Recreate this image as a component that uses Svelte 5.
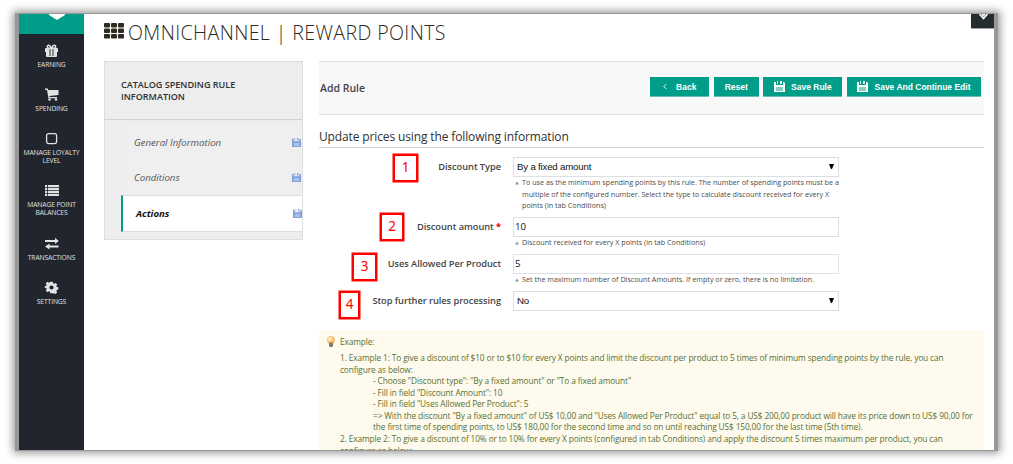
<script>
  const nav = [
    { icon: 'gift', lines: ['EARNING'] },
    { icon: 'cart', lines: ['SPENDING'] },
    { icon: 'square', lines: ['MANAGE LOYALTY', 'LEVEL'] },
    { icon: 'list', lines: ['MANAGE POINT', 'BALANCES'] },
    { icon: 'swap', lines: ['TRANSACTIONS'] },
    { icon: 'gear', lines: ['SETTINGS'] }
  ];
  const tabs = [
    { name: 'General Information' },
    { name: 'Conditions' },
    { name: 'Actions', active: true }
  ];
  const fields = [
    {
      label: 'Discount Type', value: 'By a fixed amount', select: true, height: 60,
      hint: ['To use as the minimum spending points by this rule. The number of spending points must be a', 'multiple of the configured number. Select the type to calculate discount received for every X', 'points (in tab Conditions)']
    },
    { label: 'Discount amount', value: '10', required: true, height: 37, hint: ['Discount received for every X points (in tab Conditions)'] },
    { label: 'Uses Allowed Per Product', value: '5', height: 37, hint: ['Set the maximum number of Discount Amounts. If empty or zero, there is no limitation.'] },
    { label: 'Stop further rules processing', value: 'No', select: true, height: 39, hint: [] }
  ];
  const marks = [
    { n: 1, x: 393, y: 154, w: 25 },
    { n: 2, x: 380, y: 213, w: 24 },
    { n: 3, x: 352, y: 253, w: 25 },
    { n: 4, x: 339, y: 291, w: 21 }
  ];
  const example = [
    { t: '1. Example 1: To give a discount of $10 or to $10 for every X points and limit the discount per product to 5 times of minimum spending points by the rule, you can' },
    { t: 'configure as below:' },
    { t: '- Choose "Discount type": "By a fixed amount" or "To a fixed amount"', sub: true },
    { t: '- Fill in field "Discount Amount": 10', sub: true },
    { t: '- Fill in field "Uses Allowed Per Product": 5', sub: true },
    { t: '=> With the discount "By a fixed amount" of US$ 10,00 and "Uses Allowed Per Product" equal to 5, a US$ 200,00 product will have its price down to US$ 90,00 for', sub: true },
    { t: 'the first time of spending points, to US$ 180,00 for the second time and so on until reaching US$ 150,00 for the last time (5th time).', sub: true },
    { t: '2. Example 2: To give a discount of 10% or to 10% for every X points (configured in tab Conditions) and apply the discount 5 times maximum per product, you can' },
    { t: 'configure as below:' }
  ];
</script>

{#snippet disk(cls)}
  <svg class={cls} viewBox="0 0 11 11">
    <path d="M0 1h2v3h7V1h1l1 1v9H0z" fill="currentColor" />
    <path d="M3 0h1v3H3zM6 0h2v3H6z" fill="currentColor" opacity=".85" />
    <path d="M2 6h7v4H2z" fill="var(--slot)" />
  </svg>
{/snippet}

<div class="page">
  <div class="window">
    <aside>
      <div class="logo"><svg width="18" height="6" viewBox="0 0 18 6"><path d="M1 0h16v1L9 6 1 1z" fill="#fff" /></svg></div>
      <nav>
        {#each nav as item}
          <div class="item" class:two={item.lines.length > 1}>
            <svg width="15" height="13" viewBox="0 0 15 13" fill="#e1e2e1">
              {#if item.icon === 'gift'}
                <path d="M2 4h11q1 0 1 1v3h-1v4q0 1-1 1H3q-1 0-1-1V8H1V5q0-1 1-1z" />
                <path d="M7.2 4.3C6.5 2 5.5 1 4.4 1.3c-1.7.5-1.2 3 .4 3zM7.8 4.3C8.500 2 9.500 1 10.600 1.300c1.700.5 1.200 3-.4 3z" fill="none" stroke="#e1e2e1" stroke-width="1.500" />
                <path d="M6 5v7M9 5v7" stroke="#20252e" stroke-width=".9" />
              {:else if item.icon === 'cart'}
                <path d="M1 .5h2.800l.4 1.500H14.500v5L5.400 8l.2 1H13v1.200H4.500L3 2H1z" /><circle cx="5.500" cy="11.500" r="1.300" /><circle cx="12" cy="11.500" r="1.300" />
              {:else if item.icon === 'square'}
                <rect x="2.600" y="1.600" width="10" height="10" rx="2" fill="none" stroke="#e1e2e1" stroke-width="1.300" />
              {:else if item.icon === 'list'}
                <path d="M1 1h2.200v2.200H1zM4 1h11v2.200H4zM1 4h2.200v2.200H1zM4 4h11v2.200H4zM1 7h2.200v2.200H1zM4 7h11v2.200H4zM1 10h2.200v2H1zM4 10h11v2H4z" />
              {:else if item.icon === 'swap'}
                <path d="M1 3h10V.8L14.800 4 11 7V5H1zM14.500 8.500h-9V6.500L1 9.600 5.500 12.500v-2h9z" />
              {:else}
                <path transform="translate(7.500 6.500) scale(.96)" fill-rule="evenodd" d="M-1.300-6h2.600l.3 1.600 1.200.5 1.400-.9 1.800 1.800-.9 1.400.4 1.100 1.600.3v2.400l-1.600.4-.4 1.200.9 1.400-1.800 1.700-1.400-.9-1.200.5L1.300 6h-2.600l-.3-1.500-1.200-.5-1.400.9L-6 3.200l.9-1.400-.4-1.200-1.600-.4v-1.400l1.600-.4.4-1.100-.9-1.400 1.800-1.800 1.400.9 1.200-.5zM0-2.200A2.200 2.200 0 1 0 0 2.200 2.200 2.200 0 1 0 0-2.200z" />
              {/if}
            </svg>
            {#each item.lines as line}<span>{line}</span>{/each}
          </div>
        {/each}
      </nav>
    </aside>

    <main>
      <header>
        <svg width="20" height="16" viewBox="0 0 20 16" fill="#2f2a20">
          {#each [0, 7, 14] as x}{#each [0, 5.500, 11] as y}<rect {x} {y} width="6" height="4.500" rx="1" />{/each}{/each}
        </svg>
        <h1>OMNICHANNEL | REWARD POINTS</h1>
        <div class="toggle"><svg width="13" height="8" viewBox="0 0 13 8"><path d="M2.500 0 6.500 4.500 10.500 0M5 0l1.500 1.500L8 0" fill="none" stroke="#fff" stroke-width="1.600" /></svg></div>
      </header>

      <div class="columns">
        <section class="tabs">
          <h2>CATALOG SPENDING RULE<br />INFORMATION</h2>
          <div class="tablist">
            {#each tabs as tab}
              <div class="tab" class:active={tab.active}><span>{tab.name}</span>{@render disk('mini')}</div>
            {/each}
          </div>
        </section>

        <section class="content">
          <div class="bar">
            <h3>Add Rule</h3>
            <div class="buttons">
              <button style:width="59px"><svg width="4" height="7" viewBox="0 0 5 7"><path d="M4 .5 1 3.500l3 3" fill="none" stroke="#fff" stroke-width="1.200" /></svg><span class="back">Back</span></button>
              <button style:width="45px">Reset</button>
              <button style:width="79px">{@render disk('save')}<span>Save Rule</span></button>
              <button style:width="134px">{@render disk('save')}<span>Save And Continue Edit</span></button>
            </div>
          </div>
          <h4>Update prices using the following information</h4>
          <div class="form">
            {#each fields as f}
              <div class="field" style:height="{f.height}px">
                <div class="label">{f.label}{#if f.required}<b>&nbsp;*</b>{/if}</div>
                <div class="control">
                  <div class="input" class:select={f.select}><span>{f.value}</span>{#if f.select}<svg width="5" height="5" viewBox="0 0 5 5"><path d="M0 0h5L3 5H2z" /></svg>{/if}</div>
                  {#if f.hint.length}
                    <div class="hint">
                      <svg width="4" height="4" viewBox="0 0 5 4"><path d="M2.500 0 5 4H0z" fill="#8599a2" /></svg>
                      <div>{#each f.hint as h}<p>{h}</p>{/each}</div>
                    </div>
                  {/if}
                </div>
              </div>
            {/each}
          </div>
          <div class="example">
            <div class="lead">
              <svg width="10" height="11" viewBox="0 0 10 11"><circle cx="5" cy="4" r="4" fill="#f3c577" /><circle cx="4" cy="3" r="2" fill="#fdebc0" /><path d="M3 7h4v3L6 11H4L3 10z" fill="#7a7780" /><path d="M3 6h4v1.200H3z" fill="#dd9838" /></svg>
              <span>Example:</span>
            </div>
            {#each example as line}<p class:sub={line.sub}>{line.t}</p>{/each}
          </div>
        </section>
      </div>
    </main>
  </div>
</div>
{#each marks as m}
  <div class="mark" style:left="{m.x}px" style:top="{m.y}px" style:width="{m.w}px">{m.n}</div>
{/each}

<style>
  :global(body) { margin: 0; background: #fff; }
  * { box-sizing: border-box; }
  h1, h2, h3, h4, p { margin: 0; font-weight: 400; white-space: nowrap; }
  svg { display: block; flex: none; }
  .page { height: 464px; padding: 14px 0 0 19px; background: #fff; }
  .window { position: relative; z-index: 0; width: 975px; height: 436px; display: flex; font-family: "Open Sans", sans-serif; color: #303030; }
  .window::before { content: ""; position: absolute; z-index: -1; inset: -1px -4px; background: #989898; box-shadow: 0 0 8px 2px #989898; }
  aside { width: 65px; flex: none; background: #20252e; height: 436px; }
  .logo { height: 20px; background: #009d89; display: flex; justify-content: center; padding-left: 10px; }
  nav { padding-top: 10px; }
  .item { height: 44px; display: flex; flex-direction: column; align-items: center; color: #e1e2e1; font-size: 6.700px; line-height: 8px; white-space: nowrap; letter-spacing: -.1px; }
  .item.two { height: 52.300px; }
  .item svg { margin-bottom: 4px; }
  main { flex: 1; min-width: 0; height: 436px; overflow: hidden; background: #fff; }
  header { height: 47px; display: flex; align-items: flex-start; padding-left: 20px; }
  header > svg { margin-top: 9px; }
  h1 { margin: 5px 0 0 4px; font-size: 19.600px; letter-spacing: .38px; line-height: 27px; font-weight: 300; color: #2f2a20; }
  .toggle { width: 23px; height: 15px; margin-left: auto; background: #252d2f; border-bottom: 1px solid #9aa0a0; padding-left: 6px; }
  .columns { display: flex; gap: 16px; padding: 0 10px 0 20px; }
  .tabs { width: 199px; height: 179px; flex: none; background: #ededed; border: 1px solid #dcdddf; }
  h2 { height: 58px; padding: 17px 0 0 16px; border-bottom: 1px solid #d2d2d2; font-size: 9.050px; line-height: 12px; font-weight: 600; }
  .tablist { margin: 5px 0 0 16px; }
  .tab { height: 35px; display: flex; align-items: center; justify-content: space-between; padding: 0 1px 0 13px; font-size: 9.700px; font-style: italic; color: #555; background: #efefef; }
  .tab.active { height: 37px; background: #fff; border: 1px solid #dcdfe0; border-left: 2px solid #009d89; border-right: 0; color: #111; font-weight: 700; padding: 0 0 1px 13px; font-size: 9.600px; }
  .tab :global(.mini) { width: 9px; height: 9px; color: #7f9fda; --slot: #a9c0ea; }
  .content { width: 665px; flex: none; }
  .bar { height: 54px; display: flex; align-items: center; justify-content: space-between; padding: 0 3px 2px 1px; background: #f8f8f8; border-top: 1px solid #dfdfdf; border-bottom: 1px solid #dfdfdf; }
  h3 { font-size: 10.500px; font-weight: 600; color: #444; padding-top: 2px; }
  .buttons { display: flex; gap: 4.600px; }
  button { height: 20px; padding: 0; border: 0; border-bottom: 1px solid #65c1b5; background: #009d89; color: #fff; display: flex; align-items: center; justify-content: center; font: 700 8.500px "Liberation Sans", sans-serif; white-space: nowrap; }
  button span { margin-left: 6px; }
  button .back { margin-left: 9px; }
  button :global(.save) { width: 11px; height: 11px; color: #fff; --slot: #80cec4; }
  h4 { height: 33px; padding-top: 13px; border-bottom: 1px solid #d1d1d1; font-size: 12px; letter-spacing: -.13px; line-height: 17px; }
  .form { padding-top: 9px; height: 182px; }
  .field { display: flex; }
  .label { width: 182px; text-align: right; font-size: 9.300px; letter-spacing: -.06px; line-height: 19px; font-weight: 600; color: #444; white-space: nowrap; }
  .label b { color: #ed1010; }
  .control { margin-left: 12px; width: 326px; }
  .input { height: 20px; border: 1px solid #dcdfe3; background: #fff; display: flex; align-items: center; justify-content: space-between; padding: 0 4px 1px 1px; font: 9.700px "Open Sans", sans-serif; color: #111; }
  .input.select { padding: 0 4px 2px 3px; font: 9.700px "Liberation Sans", sans-serif; letter-spacing: -.2px; }
  .hint { display: flex; gap: 3px; padding: 0 0 0 2px; font-size: 7.200px; line-height: 11.600px; color: #4c4c4c; }
  .hint svg { margin-top: 4px; }
  .example { height: 130px; padding: 6px 0 0 21px; background: #fffaee; color: #557133; font-size: 8.300px; letter-spacing: -.115px; line-height: 11.560px; }
  .lead { display: flex; gap: 4px; margin: 0 0 4.500px -14px; }
  .example .sub { padding-left: 33px; }
  .mark { position: absolute; height: 28px; border: 2px solid #f00; box-shadow: 0 0 0 .5px #f00; color: #f00; font: 13.500px/23px "Noto Sans", sans-serif; text-align: center; }
</style>
